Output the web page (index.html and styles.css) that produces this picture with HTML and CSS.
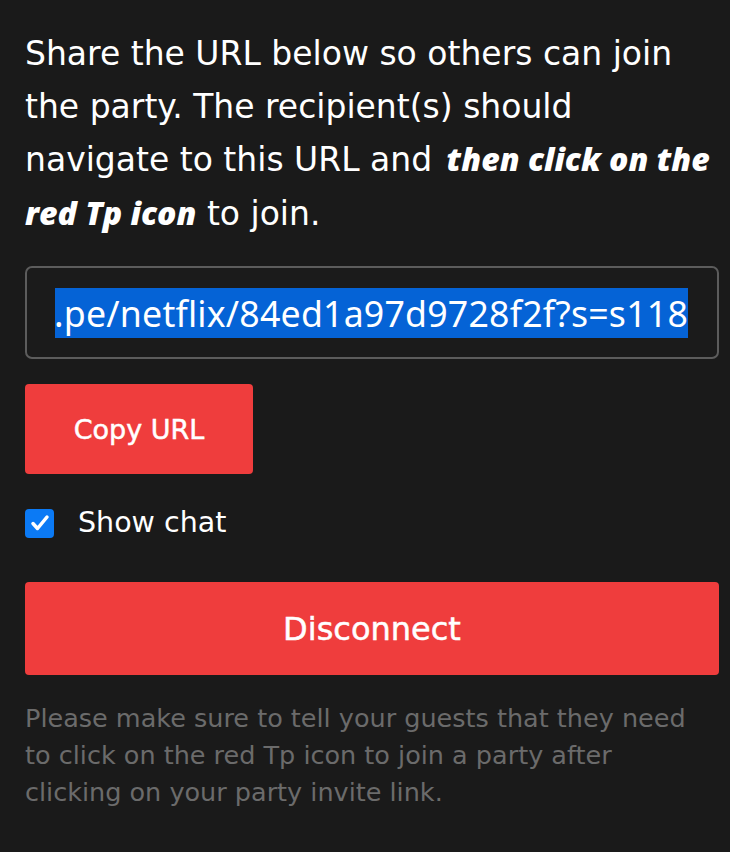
FILE: index.html
```html
<!DOCTYPE html>
<html lang="en">
<head>
    <meta charset="UTF-8">
    <meta name="viewport" content="width=device-width, initial-scale=1.0">
    <title>Share party</title>
    <link rel="stylesheet" href="styles.css">
</head>
<body>
    <div class="panel">
        <p class="intro">
            Share the URL below so others can join the party. The recipient(s) should navigate to this URL and <em class="strong">then click on the red Tp icon</em> to join.
        </p>
        <div class="url-field">
            <div class="url-clip">
                <span class="url-text">tp.pe/netflix/84ed1a97d9728f2f?s=s118</span>
            </div>
        </div>
        <button class="btn btn-copy" type="button">Copy URL</button>
        <label class="chat-toggle">
            <span class="check">
                <svg width="22" height="22" viewBox="0 0 22 22"><path d="M4 11.5l4.5 5L18 5" fill="none" stroke="#fff" stroke-width="3.5" stroke-linecap="round" stroke-linejoin="round"/></svg>
            </span>
            Show chat
        </label>
        <button class="btn btn-disconnect" type="button">Disconnect</button>
        <p class="note">
            Please make sure to tell your guests that they need to click on the red Tp icon to join a party after clicking on your party invite link.
        </p>
    </div>
</body>
</html>
```

FILE: styles.css
```css
body {
    margin: 0;
    background-color: #1a1a1a;
    color: #ffffff;
    font-family: "DejaVu Sans", sans-serif;
}
.panel {
    padding: 28px 11px 0 25px;
}
.intro {
    margin: 0;
    font-size: 33px;
    line-height: 52.5px;
}
.strong {
    font-family: "Open Sans", sans-serif;
    font-weight: 800;
    font-style: italic;
    font-size: 32px;
    margin-left: 4px;
}
.url-field {
    margin-top: 26px;
    height: 89px;
    border: 2px solid #5c5c5c;
    border-radius: 7px;
    background-color: #1b1b1b;
    padding: 0 29px 0 28px;
    display: flex;
    align-items: center;
}
.url-clip {
    flex: 1;
    display: flex;
    justify-content: flex-end;
    overflow: hidden;
    white-space: nowrap;
}
.url-text {
    background-color: #0563d6;
    color: #ffffff;
    font-family: "Noto Sans", sans-serif;
    font-size: 35.7px;
    line-height: 50px;
    letter-spacing: 0.2px;
}
.btn {
    display: block;
    border: none;
    border-radius: 4px;
    background-color: #ef3d3d;
    color: #ffffff;
    font-family: "DejaVu Sans", sans-serif;
    -webkit-text-stroke: 0.5px #ffffff;
    cursor: pointer;
}
.btn-copy {
    margin-top: 25px;
    width: 228px;
    height: 90px;
    font-size: 27px;
}
.chat-toggle {
    display: flex;
    align-items: center;
    gap: 24px;
    margin-top: 31px;
    font-size: 28.5px;
    line-height: 36px;
}
.check {
    width: 29px;
    height: 29px;
    border-radius: 4px;
    background-color: #0b7af5;
    display: flex;
    align-items: center;
    justify-content: center;
}
.btn-disconnect {
    margin-top: 41px;
    width: 100%;
    height: 93px;
    font-size: 32px;
}
.note {
    margin: 25px 0 0;
    max-width: 675px;
    color: #6b6b6b;
    font-size: 25.5px;
    line-height: 37px;
}
```
